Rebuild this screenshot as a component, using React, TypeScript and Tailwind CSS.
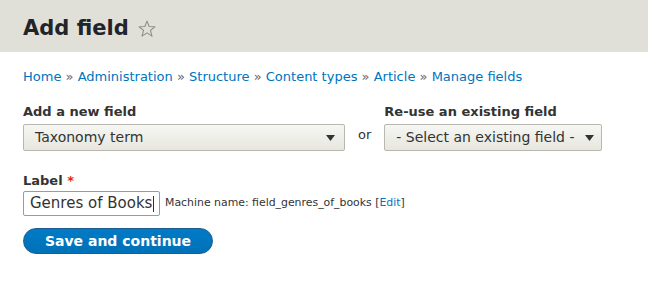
import React from "react";

const font = { fontFamily: '"DejaVu Sans", "Noto Sans", sans-serif' };

function Caret() {
  return (
    <svg width="9" height="6" viewBox="0 0 9 6" className="shrink-0">
      <path d="M0 0 L9 0 L4.5 6 Z" fill="#333" />
    </svg>
  );
}

export default function App() {
  return (
    <div className="w-[648px] h-[289px] bg-white text-[#333]" style={font}>
      <div className="h-[52px] bg-[#e0e0d8] flex items-center px-[23px] gap-[8px]">
        <h1 className="text-[21px] font-bold text-[#232429] leading-none mt-[5px]">Add field</h1>
        <svg width="20" height="20" viewBox="0 0 24 24" className="mt-[6px]">
          <path
            d="M12 2.5 L14.6 9 L21.5 9.3 L16.1 13.7 L18 20.6 L12 16.7 L6 20.6 L7.9 13.7 L2.5 9.3 L9.4 9 Z"
            fill="none"
            stroke="#8e8e86"
            strokeWidth="1.3"
            strokeLinejoin="round"
          />
        </svg>
      </div>
      <div className="px-[23px] pt-[16px] text-[13px] text-[#0074bd] leading-[18px]">
        <span>Home</span> <span className="text-[#666]">»</span> <span>Administration</span>{" "}
        <span className="text-[#666]">»</span> <span>Structure</span> <span className="text-[#666]">»</span>{" "}
        <span>Content types</span> <span className="text-[#666]">»</span> <span>Article</span>{" "}
        <span className="text-[#666]">»</span> <span>Manage fields</span>
      </div>
      <div className="px-[23px] pt-[17px] flex items-end gap-[13px]">
        <div className="flex flex-col">
          <div className="text-[13px] font-bold leading-[18px] mb-[3px]">Add a new field</div>
          <div className="w-[322px] h-[27px] border border-[#b8b8b0] rounded-[2px] bg-gradient-to-b from-[#f6f6f3] to-[#e7e7df] flex items-center pl-[11px] pr-[9px] justify-between">
            <span className="text-[14px] text-[#333]">Taxonomy term</span>
            <Caret />
          </div>
        </div>
        <div className="text-[13px] h-[27px] pb-[6px] flex items-center text-[#333]">or</div>
        <div className="flex flex-col">
          <div className="text-[13px] font-bold leading-[18px] mb-[3px]">Re-use an existing field</div>
          <div className="w-[218px] h-[27px] border border-[#b8b8b0] rounded-[2px] bg-gradient-to-b from-[#f6f6f3] to-[#e7e7df] flex items-center pl-[11px] pr-[7px] justify-between">
            <span className="text-[14px] text-[#333]">- Select an existing field -</span>
            <Caret />
          </div>
        </div>
      </div>
      <div className="px-[23px] pt-[21px]">
        <div className="text-[13px] font-bold leading-[18px] mb-[1px]">
          Label <span className="text-[#e62600]">*</span>
        </div>
        <div className="flex items-center gap-[5px]">
          <div className="w-[137px] h-[25px] border border-[#40b6ff] rounded-[2px] flex items-center pl-[6px] text-[15px] text-[#333]">
            <span>Genres of Books</span>
            <span className="w-px h-[16px] bg-[#333] ml-px" />
          </div>
          <div className="text-[10.9px] text-[#333]">
            Machine name: field_genres_of_books [<span className="text-[#0074bd]">Edit</span>]
          </div>
        </div>
      </div>
      <div className="px-[23px] pt-[12px]">
        <div className="w-[190px] h-[26px] rounded-full bg-gradient-to-b from-[#007bc6] to-[#0071b8] border border-[#1e5c90] flex items-center justify-center text-white text-[14px] font-bold">
          Save and continue
        </div>
      </div>
    </div>
  );
}
